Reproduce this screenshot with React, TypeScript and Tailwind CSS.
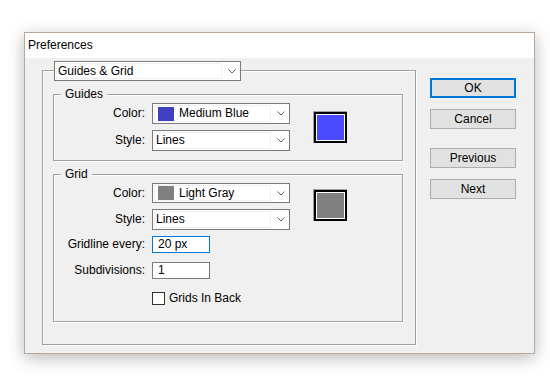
import React from "react";

function Chevron() {
  return (
    <svg width="8" height="5" viewBox="0 0 8 5" className="block">
      <polyline points="0.5,0.5 4,4 7.5,0.5" fill="none" stroke="#606060" strokeWidth="1" />
    </svg>
  );
}

function Dropdown({
  text,
  swatch,
  className,
}: {
  text: string;
  swatch?: string;
  className: string;
}) {
  return (
    <div className={`flex border border-[#7a7a7a] bg-white ${className}`}>
      <div className="m-[1px] flex flex-1 items-center border border-[#f0f0f0] pl-[1px]">
        {swatch && (
          <div className="mr-[5px] ml-[2px] h-[14px] w-[16px]" style={{ background: swatch }} />
        )}
        <span>{text}</span>
      </div>
      <div className="flex w-[17px] items-center justify-center">
        <Chevron />
      </div>
    </div>
  );
}

function Swatch({ color, className }: { color: string; className: string }) {
  return (
    <div className={`h-[32px] w-[34px] border-t border-l border-[#a0a0a0] ${className}`}>
      <div className="h-full w-full border-2 border-black">
        <div className="h-full w-full border border-white" style={{ background: color }} />
      </div>
    </div>
  );
}

function Label({ children }: { children: React.ReactNode }) {
  return <div className="mr-[7px] w-[91px] text-right">{children}</div>;
}

function Group({
  title,
  className,
  children,
}: {
  title: string;
  className: string;
  children: React.ReactNode;
}) {
  return (
    <div
      className={`relative border border-[#a0a0a0] shadow-[1px_1px_0_#fff,inset_1px_1px_0_#fff] ${className}`}
    >
      <div className="absolute -top-[8px] left-[7px] bg-[#f0f0f0] px-[4px] leading-[15px]">
        {title}
      </div>
      {children}
    </div>
  );
}

function Button({ children, primary }: { children: React.ReactNode; primary?: boolean }) {
  return (
    <div
      className={`flex h-[20px] w-[86px] items-center justify-center bg-[#e1e1e1] ${
        primary ? "border-2 border-[#0078d7]" : "border border-[#adadad]"
      }`}
    >
      {children}
    </div>
  );
}

export default function App() {
  return (
    <div
      className="h-[391px] w-[550px] bg-white pt-[32px] pl-[24px] text-[12px] leading-[15px] text-black"
      style={{ fontFamily: '"Liberation Sans", Arial, sans-serif' }}
    >
      <div className="flex h-[322px] w-[511px] flex-col border border-[#b8a898] shadow-[0_4px_16px_rgba(0,0,0,0.28)]">
        <div className="flex h-[25px] items-center bg-white pl-[3px]">Preferences</div>
        <div className="flex flex-1 bg-[#f0f0f0]">
          <div className="pt-[12px] pl-[17px]">
            <div className="relative h-[275px] w-[374px] border border-[#a0a0a0] shadow-[1px_1px_0_#fff,inset_1px_1px_0_#fff]">
              <Dropdown text="Guides & Grid" className="absolute -top-[10px] left-[11px] h-[20px] w-[187px]" />
              <div className="pt-[23px] pl-[10px]">
                <Group title="Guides" className="h-[67px] w-[350px]">
                  <div className="flex pt-[8px]">
                    <div className="flex flex-col gap-[6px]">
                      <div className="flex items-center">
                        <Label>Color:</Label>
                        <Dropdown text="Medium Blue" swatch="#4040c0" className="h-[21px] w-[138px]" />
                      </div>
                      <div className="flex items-center">
                        <Label>Style:</Label>
                        <Dropdown text="Lines" className="h-[21px] w-[138px]" />
                      </div>
                    </div>
                    <Swatch color="#4a4aff" className="mt-[8px] ml-[23px]" />
                  </div>
                </Group>
                <Group title="Grid" className="mt-[13px] h-[148px] w-[350px]">
                  <div className="flex pt-[8px]">
                    <div className="flex flex-col">
                      <div className="flex items-center">
                        <Label>Color:</Label>
                        <Dropdown text="Light Gray" swatch="#808080" className="h-[20px] w-[138px]" />
                      </div>
                      <div className="mt-[6px] flex items-center">
                        <Label>Style:</Label>
                        <Dropdown text="Lines" className="h-[21px] w-[138px]" />
                      </div>
                      <div className="mt-[6px] flex items-center">
                        <Label>Gridline every:</Label>
                        <div className="flex h-[17px] w-[58px] items-center border border-[#0078d7] bg-white pl-[5px]">
                          20 px
                        </div>
                      </div>
                      <div className="mt-[9px] flex items-center">
                        <Label>Subdivisions:</Label>
                        <div className="flex h-[17px] w-[58px] items-center border border-[#7a7a7a] bg-white pl-[5px]">
                          1
                        </div>
                      </div>
                      <div className="mt-[12px] flex items-center">
                        <div className="w-[98px]" />
                        <div className="h-[13px] w-[13px] border border-[#333] bg-white" />
                        <span className="ml-[4px]">Grids In Back</span>
                      </div>
                    </div>
                    <Swatch color="#808080" className="mt-[6px] ml-[23px]" />
                  </div>
                </Group>
              </div>
            </div>
          </div>
          <div className="ml-[14px] flex flex-col pt-[20px]">
            <Button primary>OK</Button>
            <div className="mt-[11px]">
              <Button>Cancel</Button>
            </div>
            <div className="mt-[19px]">
              <Button>Previous</Button>
            </div>
            <div className="mt-[11px]">
              <Button>Next</Button>
            </div>
          </div>
        </div>
      </div>
    </div>
  );
}
